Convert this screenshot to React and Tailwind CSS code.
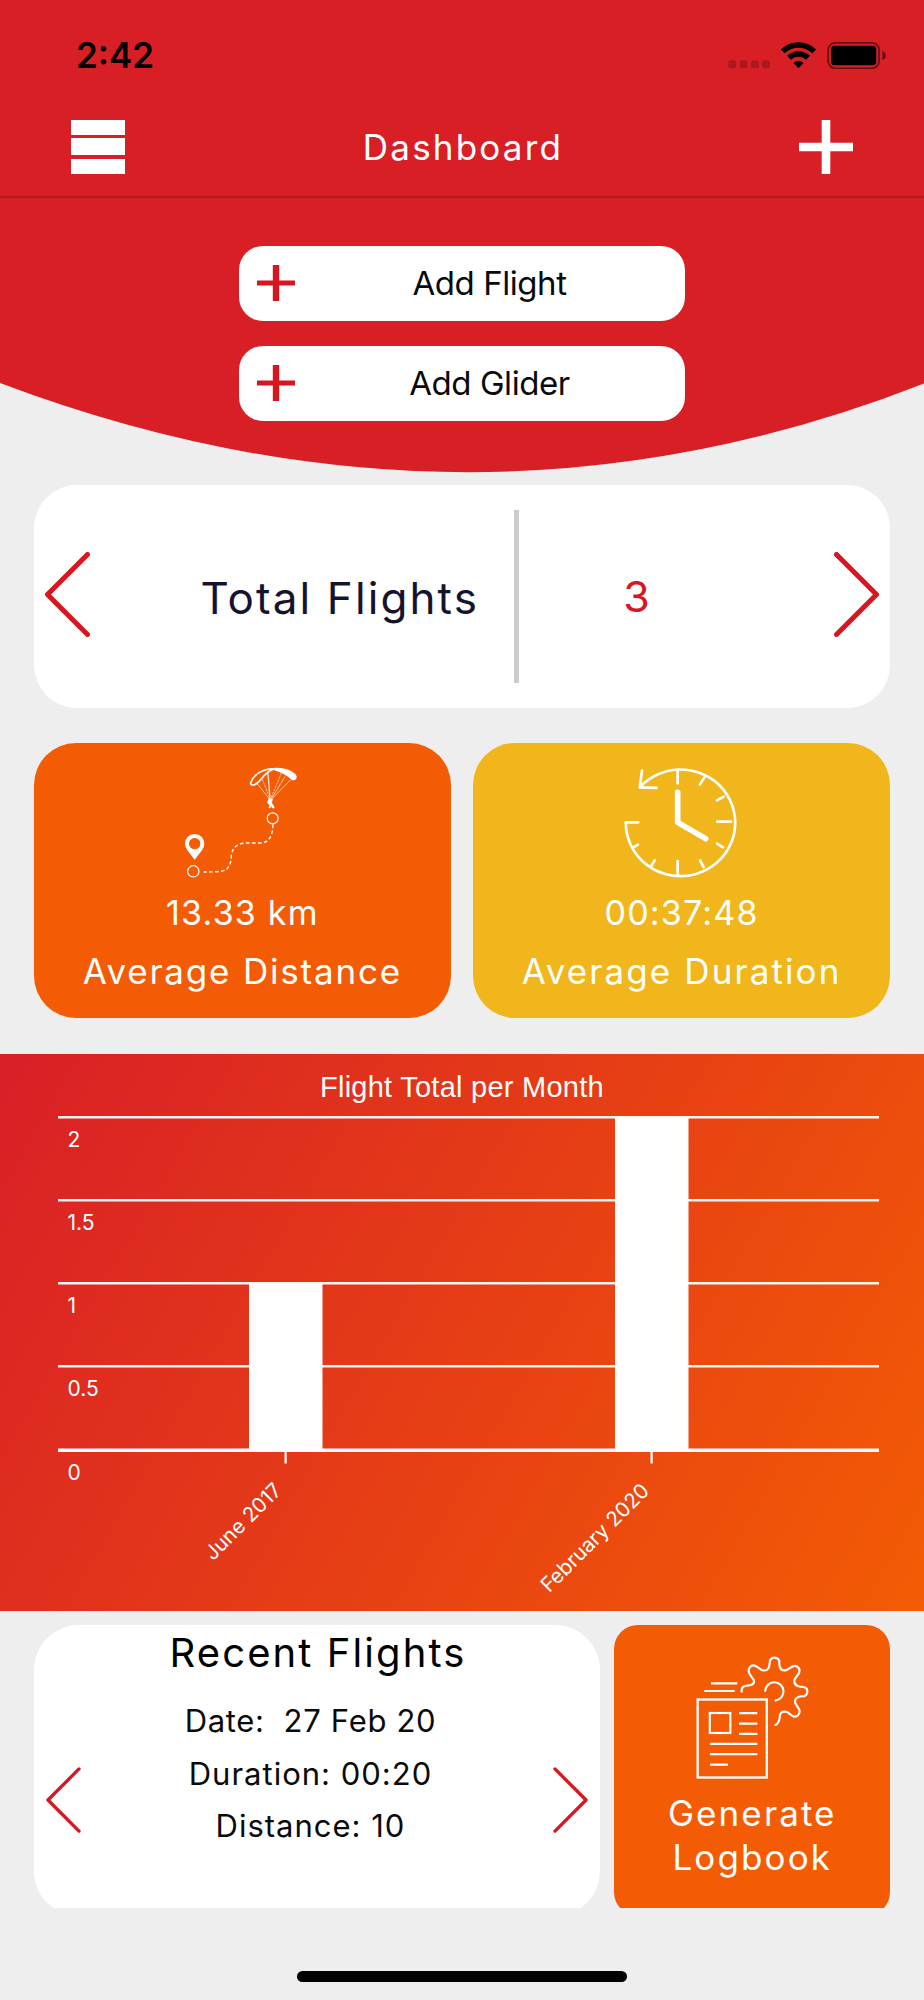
const flightsPerMonth = [
  { month: 'June 2017', total: 1, x: 285.5, labelX: 283, labelY: 437.5 },
  { month: 'February 2020', total: 2, x: 651.5, labelX: 650.5, labelY: 438 },
];

const gridLines = [
  { label: '2', y: 63.5 },
  { label: '1.5', y: 146.5 },
  { label: '1', y: 229.5 },
  { label: '0.5', y: 312.5 },
];

const BASELINE = 396.5;
const UNIT = 166.5;

function StatusIcons() {
  return (
    <svg width="158" height="27" viewBox="0 0 158 27">
      {/* No signal dots */}
      <g fill="#000" fillOpacity="0.2">
        <rect x="0.3" y="18.3" width="8" height="8" rx="2.5" />
        <rect x="11.6" y="18.3" width="8" height="8" rx="2.5" />
        <rect x="23" y="18.3" width="8" height="8" rx="2.5" />
        <rect x="34" y="18.3" width="8" height="8" rx="2.5" />
      </g>
      {/* Wifi */}
      <g fill="none" stroke="#000" strokeWidth="5.5">
        <path d="M54.8 9.4 A22.5 22.5 0 0 1 86.2 9.4" />
        <path d="M61 15.8 A13.8 13.8 0 0 1 80 15.8" />
      </g>
      <path d="M70.5 26.2 L65.4 21 Q70.5 16.6 75.6 21 Z" fill="#000" />
      {/* Battery */}
      <rect x="100.2" y="0.9" width="50.8" height="25.4" rx="7" fill="none" stroke="#000" strokeOpacity="0.5" strokeWidth="1.8" />
      <rect x="103" y="3.7" width="45.2" height="19.6" rx="3.5" fill="#000" />
      <path d="M154.3 9 Q158 10.5 158 13.5 Q158 16.5 154.3 18 Z" fill="#000" fillOpacity="0.5" />
    </svg>
  );
}

function Header() {
  return (
    <header className="h-[198px] border-b-2 border-[#b21a20] bg-[#d81f26]">
      <div className="flex h-[111px] items-center justify-between pl-[76px] pr-[38px]">
        <span className="text-[35px] font-semibold leading-none text-black">2:42</span>
        <StatusIcons />
      </div>
      <nav className="flex items-start justify-between px-[71px] pt-[8.5px]">
        <button className="flex h-[54px] w-[54px] flex-col gap-[3.5px]">
          <span className="h-[15px] w-full bg-white" />
          <span className="h-[17px] w-full bg-white" />
          <span className="h-[15px] w-full bg-white" />
        </button>
        <h1 className="h-[54px] pl-[2px] text-[35px] leading-[54px] tracking-[2.2px] text-white">Dashboard</h1>
        <button>
          <svg width="54" height="54" viewBox="0 0 54 54" stroke="#fff" strokeWidth="8.6">
            <path d="M27 0 V54 M0 27 H54" />
          </svg>
        </button>
      </nav>
    </header>
  );
}

function AddButton({ label }) {
  return (
    <button className="flex h-[75.5px] w-[446px] items-center rounded-[24px] bg-white pl-[18px]">
      <svg width="38" height="36" viewBox="0 0 38 36" className="shrink-0" stroke="#d8161f" fill="none">
        <path d="M19 0 V36" strokeWidth="6.4" />
        <path d="M0 18 H38" strokeWidth="5" />
      </svg>
      <span className="flex-1 pl-[2px] pr-[3px] pt-px text-center text-[33px] tracking-[-0.45px] text-[#0a0a0a]">{label}</span>
    </button>
  );
}

function Chevron({ direction, className, strokeWidth }) {
  return (
    <svg viewBox="0 0 45 85" className={className} fill="none" stroke="#d8161f" strokeWidth={strokeWidth} strokeLinecap="round" strokeLinejoin="round">
      <path d={direction === 'left' ? 'M42.5 2.5 L2.5 42.5 L42.5 82.5' : 'M2.5 2.5 L42.5 42.5 L2.5 82.5'} />
    </svg>
  );
}

function RouteIcon() {
  return (
    <svg width="115" height="111" viewBox="487 111 345 333" className="mr-[5px]" fill="none" stroke="#fff">
      {/* Canopy */}
      <path d="M693 159 Q701 133 730 122 Q745 116 763 117 Q742 124 724 148 Q708 166 699 165 Q692 164 693 159 Z" strokeWidth="5" />
      <path d="M760 114 Q802 110 827 132 Q834 140 829 147 Q824 153 815 149 Q795 130 764 121 Z" fill="#fff" stroke="none" />
      {/* Lines */}
      <g strokeWidth="2.5" strokeOpacity="0.8">
        <path d="M712 160 L750 208 M796 140 L754 208 M812 150 L755 208" />
        <path d="M728 148 L751 206 M785 130 L753 206" strokeDasharray="7 3" />
        <path d="M745 130 L751 206" strokeWidth="4" />
      </g>
      <path d="M747 205 L760 207 L756 218 L762 226 L765 235 L757 235 L756 229 L751 235 L746 234 L750 226 L742 218 Z" fill="#fff" stroke="none" />
      {/* Route */}
      <circle cx="759" cy="265" r="16.5" strokeWidth="3.5" />
      <path d="M760 283 Q759 338 722 339 H678 Q640 341 635 376 Q634 424 600 424 Q590 426 552 426" strokeWidth="4" strokeDasharray="11 7" />
      <circle cx="521" cy="424" r="17" strokeWidth="3.5" />
      {/* Pin */}
      <path d="M525 389 L503 361 Q496 351 496 341 A29 29 0 0 1 554 341 Q554 351 547 361 Z M525 324 A17 17 0 1 0 525.1 324 Z" fill="#fff" fillRule="evenodd" stroke="none" />
    </svg>
  );
}

function ClockIcon() {
  return (
    <svg width="113" height="111" viewBox="487 111 339 333" className="mr-[2px]" fill="none" stroke="#fff" strokeLinecap="round" strokeLinejoin="round">
      <g strokeWidth="8">
        <path d="M530 277 H492.5 A164 160 0 1 0 535 171" />
        <path d="M541 122 L534.5 172 L585 173.5" />
        <path d="M648 120 V160 M728 142 L715 163 M786 200 L766 211 M808 275 H767 M766 341 L784 352 M715 391 L726 411 M648 393 V434 M579 391 L567 411 M529 344 L514 353" />
      </g>
      <path d="M648 187 V277 L732 326" strokeWidth="17" />
    </svg>
  );
}

function LogbookIcon() {
  return (
    <svg width="113" height="123" viewBox="317 136 339 369" className="ml-[2px]" fill="none" stroke="#fff" strokeWidth="6.5">
      <path d="M362 218 H441 M342 241 H433" />
      <rect x="322" y="266.5" width="207.5" height="234" strokeWidth="7" />
      <rect x="358.5" y="307" width="61.5" height="60" />
      <path d="M446 307.5 H501 M446 339 H501 M446 369.5 H501 M359 399.5 H501 M359 430.5 H501 M359 462 H413" />
      <path
        strokeLinecap="round"
        d="M454 243 V238 Q455 228 464 226 L482 223 Q494 218 490 208 L478 190 Q471 176 481 167 Q488 161 498 167 L514 178 Q528 183 535 172 Q538 164 539 150 Q543 141 552 141 Q562 141 567 150 Q566 162 569 170 Q574 183 589 178 L608 167 Q618 163 625 172 Q630 179 625 189 L613 206 Q609 220 622 226 Q630 229 640 229 Q651 231 651 242 Q651 254 640 257 Q632 256 626 258 Q611 263 615 278 L627 297 Q630 308 622 315 Q614 321 605 315 L590 304 Q574 299 569 312 Q568 338 555 343"
      />
      <path strokeLinecap="round" d="M524.5 241 A27.5 27.5 0 1 1 556 269.5" />
    </svg>
  );
}

function StatCard({ icon, value, label, className, labelClassName }) {
  return (
    <div className={`flex h-[274.5px] flex-1 flex-col items-center rounded-[42px] pt-[23.5px] text-white ${className}`}>
      {icon}
      <div className="mt-[10px] h-[50px] text-[34px] leading-[50px] tracking-[1.2px]">{value}</div>
      <div className={`mt-[7px] h-[52px] text-[35px] leading-[52px] ${labelClassName}`}>{label}</div>
    </div>
  );
}

function FlightChart() {
  return (
    <section className="mt-9 h-[557.5px] shrink-0 bg-[linear-gradient(120deg,#d91f27_0%,#f35c04_100%)]">
      <svg width="924" height="557" viewBox="0 0 924 557" className="block" fill="#fff">
        <text x="320" y="43" fontSize="29" letterSpacing="0.25" fontFamily="Liberation Sans">Flight Total per Month</text>
        {gridLines.map((line) => (
          <g key={line.label}>
            <rect x="58" y={line.y - 1.5} width="821" height="2.5" fillOpacity="0.95" />
            <text x="67.5" y={line.y + 29.5} fontSize="21">{line.label}</text>
          </g>
        ))}
        {flightsPerMonth.map((item) => (
          <g key={item.month}>
            <rect x={item.x - 36.5} y={BASELINE - item.total * UNIT} width="73.5" height={item.total * UNIT} />
            <rect x={item.x - 1} y={BASELINE} width="2.2" height="13" />
            <text transform={`translate(${item.labelX} ${item.labelY}) rotate(-45)`} textAnchor="end" fontSize="20.5">
              {item.month}
            </text>
          </g>
        ))}
        <rect x="58" y={BASELINE - 2} width="821" height="3.5" />
        <text x="67.5" y="425.5" fontSize="21">0</text>
      </svg>
    </section>
  );
}

function RecentFlights() {
  return (
    <div className="flex h-[291px] w-[566px] shrink-0 justify-between rounded-[45px] bg-white px-[12px]">
      <Chevron direction="left" className="mt-[141.5px] h-[66px] w-[35px]" strokeWidth="4.2" />
      <div className="flex flex-col items-center">
        <h2 className="mt-[6px] h-[44px] pl-[2px] text-[40px] leading-[44px] tracking-[2.1px] text-black">Recent Flights</h2>
        <div className="mt-[20px] whitespace-pre pr-[13px] text-center text-[31px] leading-[52.5px] tracking-[1px] text-[#0a0a0a]">
          <p className="tracking-[0.7px]">{'Date:  27 Feb 20'}</p>
          <p>Duration: 00:20</p>
          <p>Distance: 10</p>
        </div>
      </div>
      <Chevron direction="right" className="mt-[141.5px] h-[66px] w-[35px]" strokeWidth="4.2" />
    </div>
  );
}

export default function App() {
  return (
    <div className="flex h-[2000px] w-[924px] flex-col bg-[#eeeeee] font-[Inter,sans-serif]">
      <Header />

      {/* Hero with curved bottom edge */}
      <section className="relative h-[274px] shrink-0">
        <svg className="absolute inset-0" width="924" height="275" viewBox="0 0 924 275" fill="#d81f26">
          <path d="M0 0 H924 V185.5 Q472 363 0 185 Z" />
        </svg>
        <div className="relative flex flex-col items-center gap-[24.5px] pt-[47.5px]">
          <AddButton label="Add Flight" />
          <AddButton label="Add Glider" />
        </div>
      </section>

      {/* Totals carousel */}
      <section className="mx-[34px] mt-[13px] flex h-[222.5px] shrink-0 items-center rounded-[43px] bg-white">
        <Chevron direction="left" className="ml-[11px] mt-[-4px] h-[85px] w-[45px] shrink-0" strokeWidth="5" />
        <div className="w-[424px] pr-[35px] pt-[3px] text-right text-[44px] leading-[50px] tracking-[2.1px] text-[#16132f]">Total Flights</div>
        <div className="h-[173px] w-[4.5px] bg-[#cccccc]" />
        <div className="mt-[-1px] w-[236px] text-center text-[43px] leading-[50px] text-[#d8161f]">3</div>
        <Chevron direction="right" className="ml-auto mr-[11px] mt-[-4px] h-[85px] w-[45px] shrink-0" strokeWidth="5" />
      </section>

      {/* Averages */}
      <section className="mx-[34px] mt-[35.5px] flex shrink-0 gap-[22.5px]">
        <StatCard icon={<RouteIcon />} value="13.33 km" label="Average Distance" className="bg-[#f35c04]" labelClassName="tracking-[1.8px]" />
        <StatCard icon={<ClockIcon />} value="00:37:48" label="Average Duration" className="bg-[#f1b61c]" labelClassName="tracking-[2.1px]" />
      </section>

      <FlightChart />

      <section className="mx-[34px] mt-[14px] flex h-[283px] shrink-0 gap-[13.5px] overflow-hidden">
        <RecentFlights />
        <div className="flex h-[291px] flex-1 flex-col items-center rounded-[24px] bg-[#f35c04] pt-[30.5px]">
          <LogbookIcon />
          <div className="mt-[12px] pl-[1px] text-center text-[35px] leading-[44px] tracking-[2.1px] text-white">
            <p>Generate</p>
            <p>Logbook</p>
          </div>
        </div>
      </section>

      {/* Home indicator */}
      <div className="mx-auto mt-[62.5px] h-[11.5px] w-[330px] rounded-full bg-black" />
    </div>
  );
}
